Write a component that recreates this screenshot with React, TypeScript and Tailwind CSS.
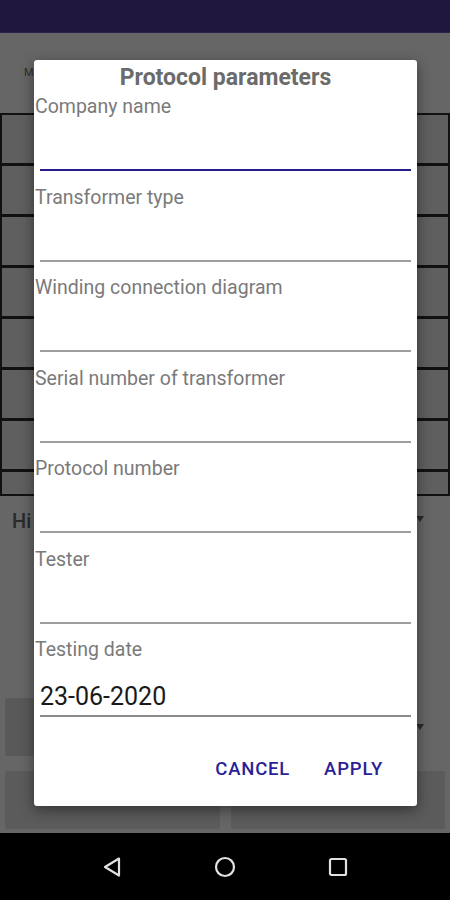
const fields = [
  'Company name',
  'Transformer type',
  'Winding connection diagram',
  'Serial number of transformer',
  'Protocol number',
  'Tester',
]

function Field({ label, focused }: { label: string; focused?: boolean }) {
  return (
    <div className="mb-[13.5px]">
      <div className="h-[25px] pt-[1px] pl-[1px] text-[19.5px] leading-[24px] text-[#7a7a7a]">{label}</div>
      <div
        className={
          focused
            ? 'mx-[6px] h-[52px] border-b-2 border-[#261c8c]'
            : 'mx-[6px] h-[52px] border-b-2 border-[#9e9e9e]'
        }
      />
    </div>
  )
}

export default function App() {
  return (
    <div className="relative w-[450px] h-[900px] flex flex-col overflow-hidden font-['Roboto',sans-serif]">
      {/* status bar */}
      <div className="h-[33px] bg-[#20173f] border-b border-[#2b2250]" />

      {/* dimmed app behind the dialog */}
      <main className="flex-1 flex flex-col bg-[#666666]">
        <div className="h-[80px] pt-[33px] pl-[24px] text-[11px] leading-[14px] text-[#2e2e2e]">M</div>

        <div className="grid grid-cols-3 gap-[3px] bg-[#111111] p-[2px]">
          {Array.from({ length: 21 }).map((_, i) => (
            <div key={i} className="h-[48px] bg-[#5f5f5f]" />
          ))}
          <div className="h-[22px] bg-[#5f5f5f]" />
          <div className="h-[22px] bg-[#5f5f5f]" />
          <div className="h-[22px] bg-[#5f5f5f]" />
        </div>

        <div className="h-[50px] flex items-center justify-between pl-[12px] pr-[26px]">
          <span className="text-[20px] font-medium text-[#2a2a2a]">Hi</span>
          <span className="mb-[4px] w-0 h-0 border-l-[4px] border-r-[4px] border-t-[6px] border-l-transparent border-r-transparent border-t-[#2a2a2a]" />
        </div>

        <div className="mt-[152px] h-[58px] flex items-center justify-between pl-[5px] pr-[26px]">
          <div className="w-[200px] h-[58px] rounded-[3px] bg-[#595959]" />
          <span className="w-0 h-0 border-l-[4px] border-r-[4px] border-t-[6px] border-l-transparent border-r-transparent border-t-[#2a2a2a]" />
        </div>

        <div className="mt-[15px] flex gap-[11px] px-[5px]">
          <div className="flex-1 h-[58px] rounded-[3px] bg-[#5b5b5b]" />
          <div className="flex-1 h-[58px] rounded-[3px] bg-[#5b5b5b]" />
        </div>
      </main>

      {/* navigation bar */}
      <nav className="h-[67px] bg-black flex items-center justify-center gap-[92px]">
        <svg width="20" height="22" viewBox="0 0 20 22" fill="none" stroke="#e2e2e2" strokeWidth="2.2" strokeLinejoin="round">
          <path d="M17 2.5 L3 11 L17 19.5 Z" />
        </svg>
        <svg width="22" height="22" viewBox="0 0 22 22" fill="none" stroke="#e2e2e2" strokeWidth="2.2">
          <circle cx="11" cy="11" r="9" />
        </svg>
        <svg width="20" height="20" viewBox="0 0 20 20" fill="none" stroke="#e2e2e2" strokeWidth="2.2">
          <rect x="2" y="2" width="16" height="16" rx="1.5" />
        </svg>
      </nav>

      {/* dialog */}
      <div className="absolute left-[34px] top-[60px] w-[383px] h-[746px] rounded-[3px] bg-white shadow-[0_4px_14px_rgba(0,0,0,0.45)] flex flex-col">
        <div className="pt-[6px] h-[34px] text-center text-[23px] leading-[24px] font-bold text-[#6b6b6b]">
          Protocol parameters
        </div>
        {fields.map((f, i) => (
          <Field key={f} label={f} focused={i === 0} />
        ))}
        <div>
          <div className="h-[25px] pt-[1px] pl-[1px] text-[19.5px] leading-[24px] text-[#7a7a7a]">Testing date</div>
          <div className="mx-[6px] h-[55px] border-b-2 border-[#8a8a8a] flex items-end pb-[3px]">
            <span className="text-[25px] leading-[30px] text-[#1a1a1a]">23-06-2020</span>
          </div>
        </div>
        <div className="flex justify-end gap-[34px] pr-[34px] mt-[39px]">
          <span className="text-[18.5px] font-medium tracking-[0.8px] text-[#2b1f97]">CANCEL</span>
          <span className="text-[18.5px] font-medium tracking-[0.8px] text-[#2b1f97]">APPLY</span>
        </div>
      </div>
    </div>
  )
}
